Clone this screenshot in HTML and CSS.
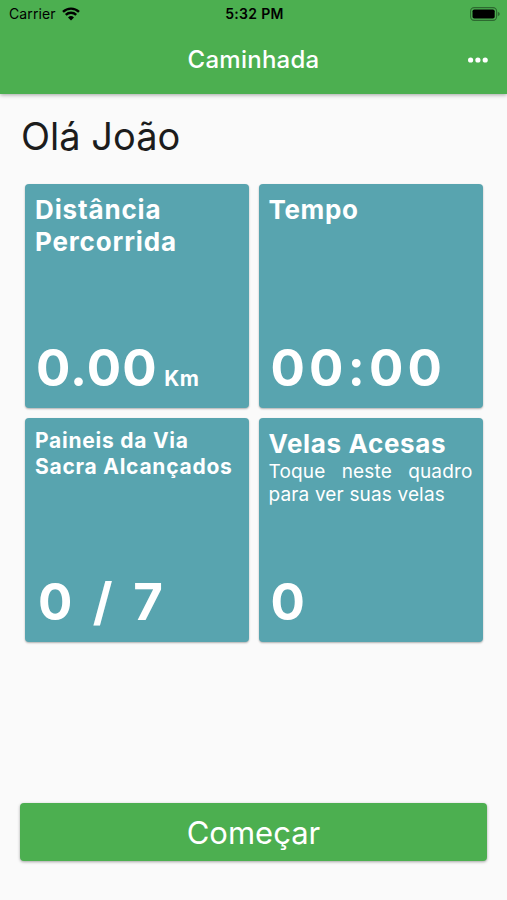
FILE: index.html
```html
<!DOCTYPE html>
<html lang="pt">
<head>
	<meta charset="utf-8">
	<title>Caminhada</title>
	<link rel="stylesheet" href="styles.css">
</head>
<body>
	<div class="screen">
		<header class="appbar">
			<div class="status">
				<div class="carrier">
					<span>Carrier</span>
					<svg class="wifi" width="18" height="14" viewBox="0 0 18 14">
						<path d="M1 4.9a11.4 11.4 0 0 1 16 0" />
						<path d="M3.8 7.9a7.4 7.4 0 0 1 10.4 0" />
						<path class="dot" d="M6 10.4a4.3 4.3 0 0 1 6 0L9 13.4z" />
					</svg>
				</div>
				<div class="clock">5:32 PM</div>
				<svg class="battery" width="30" height="14" viewBox="0 0 30 14">
					<rect class="shell" x="0.6" y="0.6" width="26" height="12.8" rx="3.6" />
					<rect x="2.5" y="2.5" width="22.2" height="9" rx="1.8" />
					<path class="cap" d="M27.8 4.8q2 .7 2 2.2t-2 2.2z" />
				</svg>
			</div>
			<div class="toolbar">
				<h1>Caminhada</h1>
				<svg class="more" width="20" height="6" viewBox="0 0 20 6">
					<circle cx="2.6" cy="3" r="2.6" />
					<circle cx="9.9" cy="3" r="2.6" />
					<circle cx="17.2" cy="3" r="2.6" />
				</svg>
			</div>
		</header>

		<main class="content">
			<h2 class="hello">Olá João</h2>
			<div class="cards">
				<div class="card">
					<h3 class="wide">Distância Percorrida</h3>
					<div class="value distance">0.00<small>Km</small></div>
				</div>
				<div class="card">
					<h3>Tempo</h3>
					<div class="value time">00:00</div>
				</div>
				<div class="card">
					<h3 class="small">Paineis da Via Sacra Alcançados</h3>
					<div class="value panels">0 / 7</div>
				</div>
				<div class="card">
					<h3>Velas Acesas</h3>
					<p>Toque neste quadro para ver suas velas</p>
					<div class="value candles">0</div>
				</div>
			</div>
			<button class="start">Começar</button>
		</main>
	</div>
</body>
</html>
```

FILE: styles.css
```css
*					{ box-sizing: border-box; }
body				{ margin: 0; background: #fafafa; font-family: Inter, "Liberation Sans", sans-serif; }
h1, h2, h3, p		{ margin: 0; }
.screen				{ display: flex; flex-direction: column; height: 900px; overflow: hidden; }

.appbar				{ height: 94px; background: #4caf50; box-shadow: 0 1px 4px rgba(0, 0, 0, 0.35); }
.status				{ display: grid; grid-template-columns: 1fr auto 1fr; align-items: center;
					  height: 27px; padding: 0 7px 0 9px; font-size: 14px; }
.carrier			{ display: flex; align-items: center; gap: 6px; letter-spacing: 0.1px; }
.clock				{ font-weight: 600; letter-spacing: 0.3px; }
.wifi				{ fill: none; stroke: #000000; stroke-width: 2.4; }
.wifi .dot			{ fill: #000000; stroke: none; }
.battery			{ justify-self: end; }
.battery .shell		{ fill: none; stroke: #2d6930; stroke-width: 1.1; }
.battery .cap		{ fill: #2d6930; }
.toolbar			{ display: grid; grid-template-columns: 1fr auto 1fr; align-items: center;
					  height: 65px; padding: 0 19px; color: #ffffff; }
.toolbar h1			{ grid-column: 2; font-size: 24px; font-weight: 500; letter-spacing: 0.25px; }
.more				{ justify-self: end; fill: #ffffff; }

.content			{ flex: 1; display: flex; flex-direction: column; padding: 18px 20px 39px; }
.hello				{ height: 72px; padding-left: 1px; line-height: 48px; font-size: 38px; font-weight: 400;
					  color: #1c1c1c; }
.cards				{ display: grid; grid-template-columns: 224px 224px; grid-auto-rows: 224px; gap: 9.5px;
					  padding-left: 5px; }
.card				{ display: flex; flex-direction: column; padding: 10px; color: #ffffff;
					  background: #58a4af; border-radius: 4px;
					  box-shadow: 0 1px 2px rgba(0, 0, 0, 0.3); }
.card h3			{ line-height: 32px; font-size: 26px; font-weight: 700; letter-spacing: 0.65px; }
.card h3.wide		{ letter-spacing: 0.85px; }
.card h3.small		{ line-height: 26px; font-size: 21px; letter-spacing: 0.75px; }
.card p				{ line-height: 23px; font-size: 19px; letter-spacing: 0.15px; text-align: justify; }
.value				{ height: 60px; margin-top: auto; line-height: 60px; font-size: 51px; font-weight: 700;
					  letter-spacing: 4.2px; white-space: nowrap; }
.distance			{ padding-left: 1px; letter-spacing: 1.1px; }
.distance small		{ margin-left: 6.5px; line-height: 1; font-size: 21px; letter-spacing: 0.6px; }
.time,
.candles			{ padding-left: 2px; }
.panels				{ padding-left: 3px; }

.start				{ height: 58px; margin-top: auto; padding: 0; border: 0; border-radius: 4px;
					  font: 400 31px Inter, "Liberation Sans", sans-serif;
					  color: #ffffff; background: #4caf50;
					  box-shadow: 0 1px 3px rgba(0, 0, 0, 0.35); }
```
